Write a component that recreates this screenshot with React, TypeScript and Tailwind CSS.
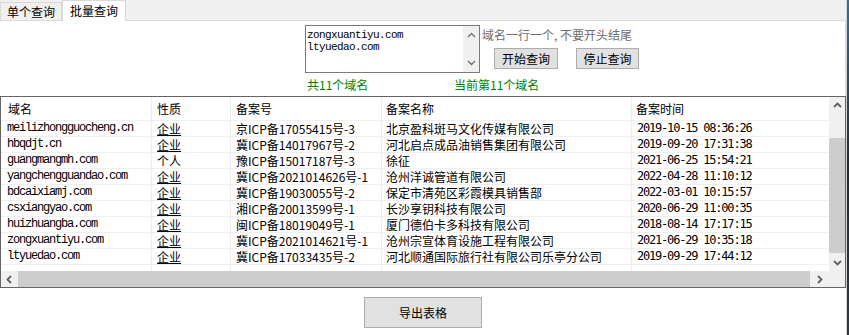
import React from 'react';

const rows = [
  ['meilizhongguocheng.cn', '企业', '京ICP备17055415号-3', '北京盈科斑马文化传媒有限公司', '2019-10-15 08:36:26'],
  ['hbqdjt.cn', '企业', '冀ICP备14017967号-2', '河北启点成品油销售集团有限公司', '2019-09-20 17:31:38'],
  ['guangmangmh.com', '个人', '豫ICP备15017187号-3', '徐征', '2021-06-25 15:54:21'],
  ['yangchengguandao.com', '企业', '冀ICP备2021014626号-1', '沧州洋诚管道有限公司', '2022-04-28 11:10:12'],
  ['bdcaixiamj.com', '企业', '冀ICP备19030055号-2', '保定市清苑区彩霞模具销售部', '2022-03-01 10:15:57'],
  ['csxiangyao.com', '企业', '湘ICP备20013599号-1', '长沙享钥科技有限公司', '2020-06-29 11:00:35'],
  ['huizhuangba.com', '企业', '闽ICP备18019049号-1', '厦门德伯卡多科技有限公司', '2018-08-14 17:17:15'],
  ['zongxuantiyu.com', '企业', '冀ICP备2021014621号-1', '沧州宗宣体育设施工程有限公司', '2021-06-29 10:35:18'],
  ['ltyuedao.com', '企业', '冀ICP备17033435号-2', '河北顺通国际旅行社有限公司乐亭分公司', '2019-09-29 17:44:12'],
];

const cols = 'grid grid-cols-[151px_79px_151px_250px_1fr]';
const cell = 'border-r border-[#ececec] last:border-r-0 overflow-hidden whitespace-nowrap';

function Chevron({ dir, thin }: { dir: 'up' | 'down' | 'left' | 'right'; thin?: boolean }) {
  const pts = {
    up: '1,6 4.5,2.5 8,6',
    down: '1,3 4.5,6.5 8,3',
    left: '6,1 2.5,4.5 6,8',
    right: '3,1 6.5,4.5 3,8',
  }[dir];
  return (
    <svg width="9" height="9" viewBox="0 0 9 9">
      <polyline points={pts} fill="none" stroke={thin ? '#707070' : '#606060'} strokeWidth={thin ? 1.4 : 1.8} />
    </svg>
  );
}

export default function App() {
  return (
    <div className="flex w-[849px] h-[335px] overflow-hidden bg-white font-['Noto_Sans_CJK_SC',sans-serif] text-[12px] leading-[16px] text-black">
      <div className="w-[846px] flex flex-col">
        {/* tabs */}
        <div className="flex items-end h-[21px] bg-[#f0f0f0] border-b border-[#d9d9d9]">
          <div className="h-[18px] px-[6px] border border-b-0 border-[#d9d9d9] flex items-center pt-[1px]">单个查询</div>
          <div className="relative z-10 -mb-px h-[21px] px-[7px] bg-white border border-b-0 border-[#d9d9d9] pt-[2px]">批量查询</div>
        </div>

        <div className="flex-1 bg-white flex flex-col">
          {/* controls */}
          <div className="h-[75px] pt-[4px] border-r border-[#dadada]">
            <div className="flex pl-[305px]">
              <div className="w-[175px] h-[48px] border border-[#7a7a7a] flex">
                <div className="flex-1 pl-[1px] pt-[3px] font-['Liberation_Mono',monospace] text-[11px] tracking-[-0.6px] leading-[12px]">
                  <div>zongxuantiyu.com</div>
                  <div>ltyuedao.com</div>
                </div>
                <div className="w-[16px] bg-[#f0f0f0] flex flex-col items-center justify-between py-[5px]">
                  <Chevron dir="up" thin />
                  <Chevron dir="down" thin />
                </div>
              </div>
              <div className="flex flex-col">
                <div className="pl-[2px] pt-[2px] text-[#6d6d6d]">域名一行一个, 不要开头结尾</div>
                <div className="flex gap-[18px] pl-[14px] pt-[5px]">
                  <button className="w-[64px] h-[21px] bg-[#e1e1e1] border border-[#adadad] leading-[18px]">开始查询</button>
                  <button className="w-[63px] h-[21px] bg-[#e1e1e1] border border-[#adadad] leading-[18px]">停止查询</button>
                </div>
              </div>
            </div>
            <div className="flex pl-[307px] pt-[4px] text-[#008000]">
              <span className="w-[147px]">共11个域名</span>
              <span>当前第11个域名</span>
            </div>
          </div>

          {/* table */}
          <div className="w-[846px] h-[192px] border border-[#646464] flex flex-col">
            <div className="flex h-[174px]">
              <div className="flex-1 flex flex-col">
                <div className={`${cols} h-[24px] border-b border-[#f0f0f0]`}>
                  <div className={`${cell} pl-[7px] leading-[23px]`}>域名</div>
                  <div className={`${cell} pl-[5px] leading-[23px]`}>性质</div>
                  <div className={`${cell} pl-[5px] leading-[23px]`}>备案号</div>
                  <div className={`${cell} pl-[4px] leading-[23px]`}>备案名称</div>
                  <div className={`${cell} pl-[4px] leading-[23px]`}>备案时间</div>
                </div>
                {rows.map((r) => (
                  <div key={r[0]} className={`${cols} h-[16px] border-b border-[#f0f0f0]`}>
                    <div className={`${cell} pl-[6px] leading-[15px] font-['Liberation_Mono',monospace] tracking-[-1.2px]`}>{r[0]}</div>
                    <div className={`${cell} pl-[5px] leading-[15px]`}>
                      <span className={r[1] === '企业' ? 'underline underline-offset-[1px]' : ''}>{r[1]}</span>
                    </div>
                    <div className={`${cell} pl-[5px] leading-[15px]`}>{r[2]}</div>
                    <div className={`${cell} pl-[4px] leading-[15px]`}>{r[3]}</div>
                    <div className={`${cell} pl-[5px] leading-[15px] font-['DejaVu_Sans_Mono',monospace] tracking-[-1.2px]`}>{r[4]}</div>
                  </div>
                ))}
                <div className={`${cols} flex-1`}>
                  <div className={cell} />
                  <div className={cell} />
                  <div className={cell} />
                  <div className={cell} />
                  <div className={cell} />
                </div>
              </div>
              <div className="w-[16px] bg-[#f0f0f0] flex flex-col">
                <div className="h-[17px] flex items-center justify-center"><Chevron dir="up" /></div>
                <div className="h-[24px]" />
                <div className="h-[115px] bg-[#cdcdcd]" />
                <div className="flex-1" />
                <div className="h-[17px] flex items-center justify-center"><Chevron dir="down" /></div>
              </div>
            </div>
            <div className="flex h-[16px] bg-[#f0f0f0]">
              <div className="w-[17px] flex items-center justify-center"><Chevron dir="left" /></div>
              <div className="w-[792px] bg-[#cdcdcd]" />
              <div className="w-[18px] flex items-center justify-center"><Chevron dir="right" /></div>
              <div className="flex-1" />
            </div>
          </div>

          {/* export */}
          <div className="pl-[364px] pt-[9px]">
            <button className="w-[118px] h-[31px] bg-[#e1e1e1] border border-[#adadad]">导出表格</button>
          </div>
        </div>
      </div>
      <div className="w-px bg-[#d6d6d6]" />
      <div className="w-[2px] bg-gradient-to-b from-[#3b6f8e] via-[#1f2b33] to-[#2b3a44]" />
    </div>
  );
}
